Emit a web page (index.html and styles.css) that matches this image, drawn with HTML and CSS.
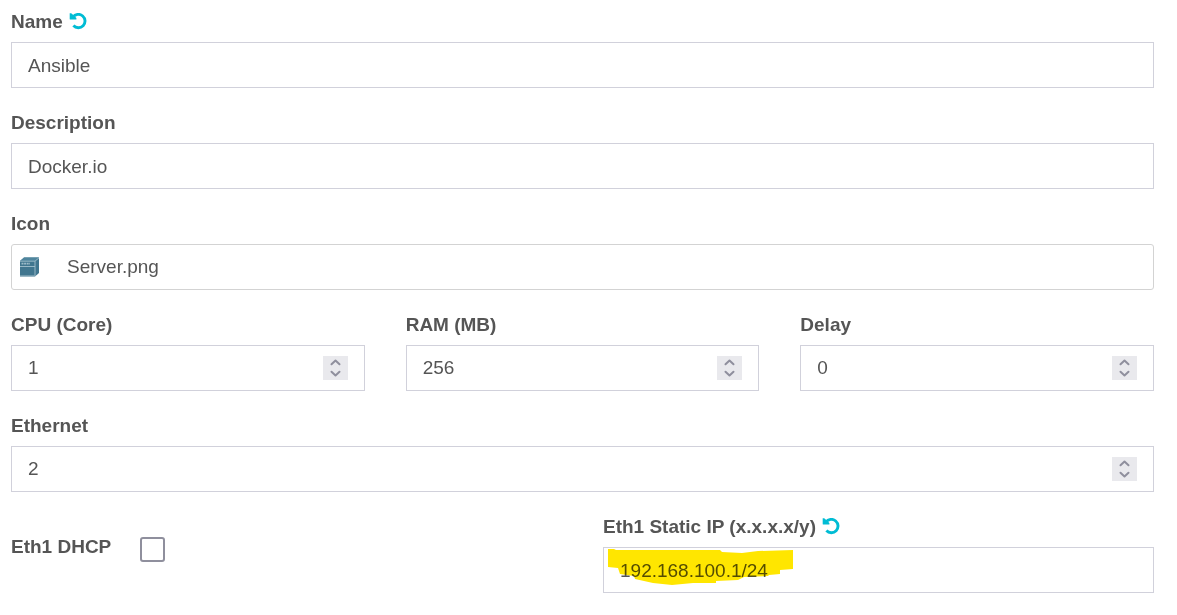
FILE: index.html
```html
<!DOCTYPE html>
<html lang="en">
<head>
<meta charset="utf-8">
<title>Node settings</title>
<link rel="stylesheet" href="styles.css">
</head>
<body>
<svg class="defs" aria-hidden="true">
  <symbol id="undo" viewBox="0 0 18 18">
    <path d="M4 4A6.700 6.700 0 1 1 4.400 12.600" fill="none" stroke="#00bcd4" stroke-width="2.900"/>
    <path d="M.7 .2H2.200L4.800 2.600L7.400 5V6.600H1.400Q.7 6.600 .7 5.900Z" fill="#00bcd4"/>
  </symbol>
  <symbol id="up" viewBox="0 0 25 12">
    <path d="M8.500 8.300L12.500 4.500L16.500 8.300" fill="none" stroke="#8f8f9d" stroke-width="2" stroke-linecap="round" stroke-linejoin="round"/>
  </symbol>
  <symbol id="down" viewBox="0 0 25 12">
    <path d="M8.500 3.700L12.500 7.500L16.500 3.700" fill="none" stroke="#8f8f9d" stroke-width="2" stroke-linecap="round" stroke-linejoin="round"/>
  </symbol>
</svg>
<form class="form">
  <div class="field">
    <div class="head">
      <label for="name">Name</label>
      <button class="reset" type="button" aria-label="Reset name"><svg><use href="#undo"/></svg></button>
    </div>
    <input class="box" id="name" type="text" value="Ansible">
  </div>
  <div class="field">
    <div class="head"><label for="description">Description</label></div>
    <input class="box" id="description" type="text" value="Docker.io">
  </div>
  <div class="field">
    <div class="head"><label for="icon">Icon</label></div>
    <div class="picker">
      <select class="box" id="icon"><option>Server.png</option></select>
      <svg class="server" viewBox="0 0 20 20" aria-hidden="true">
        <path d="M1 4L5 .5H20V16L16 19.500H1Z" fill="#41768f"/>
        <path d="M1 4L5 .5H20L16 4Z" fill="#4f859d"/>
        <path d="M1 4.200H16V19M16 4.200L20 .8M1 9.500H16" fill="none" stroke="#a3c0cc" stroke-width=".9"/>
        <path d="M2.500 6.600H11" stroke="#9dbbc8" stroke-width="1.600" stroke-dasharray="2 .6"/>
        <path d="M1 18.500H16" stroke="#7fa3b4" stroke-width=".8"/>
      </svg>
    </div>
  </div>
  <div class="columns">
    <div class="field">
      <div class="head"><label for="cpu">CPU (Core)</label></div>
      <div class="number">
        <input id="cpu" type="number" value="1">
        <div class="spinner">
          <button type="button" aria-label="Increase CPU"><svg><use href="#up"/></svg></button>
          <button type="button" aria-label="Decrease CPU"><svg><use href="#down"/></svg></button>
        </div>
      </div>
    </div>
    <div class="field">
      <div class="head"><label for="ram">RAM (MB)</label></div>
      <div class="number">
        <input id="ram" type="number" value="256">
        <div class="spinner">
          <button type="button" aria-label="Increase RAM"><svg><use href="#up"/></svg></button>
          <button type="button" aria-label="Decrease RAM"><svg><use href="#down"/></svg></button>
        </div>
      </div>
    </div>
    <div class="field">
      <div class="head"><label for="delay">Delay</label></div>
      <div class="number">
        <input id="delay" type="number" value="0">
        <div class="spinner">
          <button type="button" aria-label="Increase delay"><svg><use href="#up"/></svg></button>
          <button type="button" aria-label="Decrease delay"><svg><use href="#down"/></svg></button>
        </div>
      </div>
    </div>
  </div>
  <div class="field">
    <div class="head"><label for="ethernet">Ethernet</label></div>
    <div class="number">
      <input id="ethernet" type="number" value="2">
      <div class="spinner">
        <button type="button" aria-label="Increase ethernet"><svg><use href="#up"/></svg></button>
        <button type="button" aria-label="Decrease ethernet"><svg><use href="#down"/></svg></button>
      </div>
    </div>
  </div>
  <div class="columns halves">
    <div class="dhcp">
      <label for="dhcp">Eth1 DHCP</label>
      <input id="dhcp" type="checkbox">
    </div>
    <div class="field">
      <div class="head">
        <label for="ip">Eth1 Static IP (x.x.x.x/y)</label>
        <button class="reset" type="button" aria-label="Reset static IP"><svg><use href="#undo"/></svg></button>
      </div>
      <div class="marked">
        <input class="box" id="ip" type="text" value="192.168.100.1/24">
        <svg class="marker" viewBox="0 0 186 37" aria-hidden="true">
          <path d="M0 0H6L8 1H112L114 3L134 4L150 2L185 1V20L172 21V25L161 26L160 27L136 28L130 31L108 32V34L85 34L64 36L45 34L27 30L26 27L12 25L10 19L0 18Z" fill="#ffe600"/>
        </svg>
      </div>
    </div>
  </div>
</form>
</body>
</html>
```
FILE: styles.css
```css
* {
  box-sizing: border-box;
}

body {
  margin: 0;
  background: #fff;
  color: #555;
  font: 19px/24px "Liberation Sans", Arial, sans-serif;
}

button,
input,
select {
  margin: 0;
  padding: 0;
  border: 0;
  background: transparent;
  color: inherit;
  font: inherit;
}

svg {
  display: block;
}

.defs {
  position: absolute;
  width: 0;
  height: 0;
}

.form {
  display: flex;
  flex-direction: column;
  gap: 23px;
  padding: 10px 23px 22px 11px;
}

.field {
  min-width: 0;
}

.head {
  display: flex;
  align-items: center;
  gap: 6px;
  margin-bottom: 8px;
}

label {
  font-weight: bold;
}

.reset,
.reset svg {
  width: 18px;
  height: 18px;
}

.box,
.number {
  width: 100%;
  height: 46px;
  border: 1px solid #d1d1db;
  background: #fff;
}

.box {
  display: block;
  padding: 2px 16px 0;
}

.picker,
.marked {
  position: relative;
}

.picker .box {
  appearance: none;
  padding: 0 16px 0 55px;
  border-color: #d3d3d3;
  border-radius: 3px;
}

.server {
  position: absolute;
  top: 13px;
  left: 8px;
  width: 20px;
  height: 20px;
  pointer-events: none;
}

.columns {
  display: grid;
  grid-template-columns: repeat(3, 1fr);
  gap: 41px;
}

.halves {
  grid-template-columns: repeat(2, 1fr);
}

.number {
  display: flex;
  align-items: center;
  padding: 0 16px;
}

.number input {
  flex: 1;
  min-width: 0;
  appearance: textfield;
}

.number input::-webkit-inner-spin-button {
  appearance: none;
}

.spinner {
  display: flex;
  flex-direction: column;
  background: #e9e9ed;
}

.spinner button,
.spinner svg {
  width: 25px;
  height: 12px;
}

.dhcp {
  display: flex;
  align-items: flex-start;
  gap: 29px;
  padding-top: 20px;
}

.dhcp input {
  appearance: none;
  width: 25px;
  height: 25px;
  margin-top: 2px;
  border: 2px solid #8f8f9d;
  border-radius: 3px;
}

.marker {
  position: absolute;
  top: 2px;
  left: 5px;
  width: 186px;
  height: 37px;
  mix-blend-mode: multiply;
  pointer-events: none;
}
```
